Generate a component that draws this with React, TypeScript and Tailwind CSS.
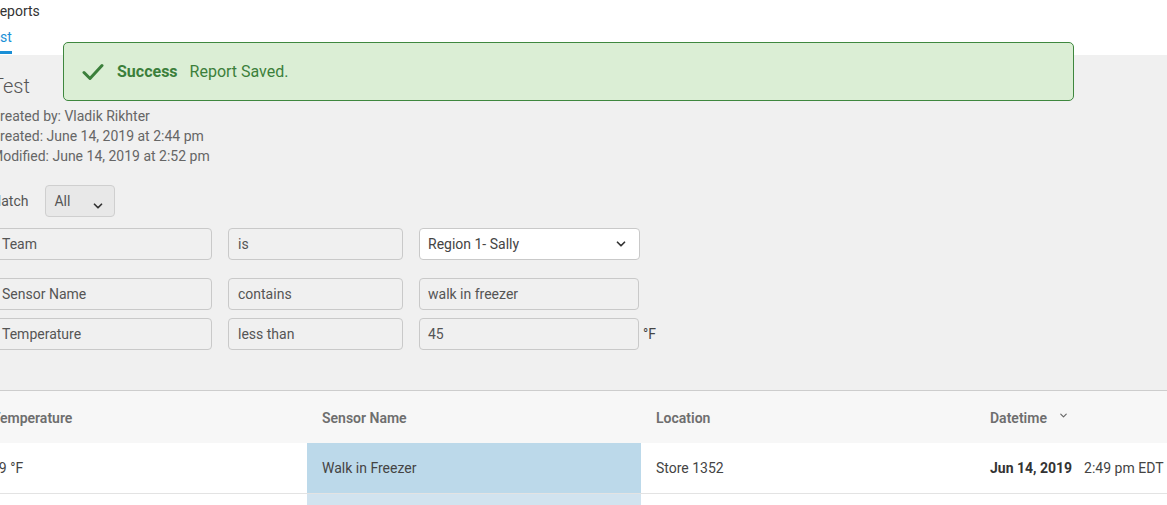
import React from "react"
import { ChevronDown } from "lucide-react"

const filters = [
  { field: "Team", op: "is", value: "Region 1- Sally", select: true },
  { field: "Sensor Name", op: "contains", value: "walk in freezer" },
  { field: "Temperature", op: "less than", value: "45", unit: "°F" },
]

function CheckIcon() {
  return (
    <svg width="22" height="20" viewBox="0 0 22 20" fill="none">
      <path d="M2 10.5 L8 16.5 L20 3.5" stroke="#3b7f3b" strokeWidth="3" strokeLinecap="round" strokeLinejoin="round" />
    </svg>
  )
}

export default function App() {
  return (
    <div className="relative w-[1167px] h-[505px] overflow-hidden bg-white text-[#555] font-['Roboto',sans-serif]">
      {/* top nav */}
      <div className="h-[55px] bg-white">
        <div className="-ml-[9px] pt-[2px] text-[14px] leading-[18px] text-[#333]">Reports</div>
        <div className="mt-[8px] -ml-[15px] inline-flex flex-col">
          <span className="text-[14px] leading-[18px] text-[#1a8fd6]">Test</span>
          <span className="mt-[5px] h-[3px] bg-[#1a8fd6]"></span>
        </div>
      </div>

      {/* body */}
      <div className="bg-[#f0f0f0] h-[335px] pt-[19px]">
        <div className="-ml-[8px]">
          <h1 className="text-[20px] leading-[24px] font-light text-[#555]">Test</h1>
          <div className="mt-[8px] text-[14px] leading-[20px] text-[#666]">
            <p className="-ml-[1px]">Created by: Vladik Rikhter</p>
            <p className="-ml-[1px]">Created: June 14, 2019 at 2:44 pm</p>
            <p className="-ml-[1px]">Modified: June 14, 2019 at 2:52 pm</p>
          </div>
        </div>

        <div className="-ml-[11px] mt-[19px] flex items-center gap-[17px]">
          <span className="text-[14px] text-[#555]">Match</span>
          <div className="relative w-[70px] h-[32px] rounded-[4px] border border-[#cfcfcf] bg-[#e8e8e8] pl-[8px] flex items-center text-[14px] text-[#555]">
            All
            <ChevronDown className="absolute right-[9px] top-[13px] w-[14px] h-[14px] text-[#333]" strokeWidth={3} />
          </div>
        </div>

        <div className="-ml-[10px] mt-[11px] flex flex-col">
          {filters.map((f, i) => (
            <div key={f.field} className={`flex items-center gap-[16px] ${i === 1 ? "mt-[18px]" : i === 2 ? "mt-[8px]" : ""}`}>
              <div className="w-[222px] h-[32px] rounded-[4px] border border-[#c9c9c9] px-[11px] flex items-center text-[14px] text-[#555]">{f.field}</div>
              <div className="w-[175px] h-[32px] rounded-[4px] border border-[#c9c9c9] px-[9px] flex items-center text-[14px] text-[#555]">{f.op}</div>
              {f.select ? (
                <div className="w-[221px] h-[32px] rounded-[4px] border border-[#c9c9c9] bg-white px-[8px] flex items-center justify-between text-[14px] text-[#444]">
                  {f.value}
                  <ChevronDown className="w-[14px] h-[14px] mr-[3px] text-[#333]" strokeWidth={3} />
                </div>
              ) : (
                <div className="w-[220px] h-[32px] rounded-[4px] border border-[#c9c9c9] px-[8px] flex items-center text-[14px] text-[#555]">{f.value}</div>
              )}
              {f.unit && <span className="-ml-[12px] text-[14px] text-[#444]">{f.unit}</span>}
            </div>
          ))}
        </div>
      </div>

      {/* table */}
      <div className="-ml-[23px] border-t border-[#cdcdcd]">
        <div className="grid grid-cols-[330px_334px_334px_1fr] h-[52px] bg-[#f7f7f7] items-center text-[14px] font-semibold text-[#6e6e6e]">
          <div className="pl-[15px] pt-[2px]">Temperature</div>
          <div className="pl-[15px] pt-[2px]">Sensor Name</div>
          <div className="pl-[15px] pt-[2px]">Location</div>
          <div className="pl-[15px] pt-[2px] flex items-center gap-[11px]">
            Datetime
            <ChevronDown className="w-[11px] h-[11px] -mt-[6px] text-[#666]" strokeWidth={2.5} />
          </div>
        </div>
        <div className="grid grid-cols-[330px_334px_334px_1fr] h-[51px] bg-white border-b border-[#e3e3e3] text-[14px] text-[#444]">
          <div className="pl-[14px] flex items-center">29 °F</div>
          <div className="pl-[15px] flex items-center bg-[#bcd9ea]">Walk in Freezer</div>
          <div className="pl-[15px] flex items-center">Store 1352</div>
          <div className="pl-[15px] flex items-center gap-[12px] whitespace-nowrap">
            <span className="font-bold text-[#333]">Jun 14, 2019</span>
            <span>2:49 pm EDT</span>
          </div>
        </div>
        <div className="grid grid-cols-[330px_334px_334px_1fr] h-[50px] bg-white">
          <div></div>
          <div className="bg-[#d1e3ef]"></div>
          <div></div>
          <div></div>
        </div>
      </div>

      {/* toast */}
      <div className="absolute left-[63px] top-[42px] w-[1011px] h-[59px] rounded-[5px] border border-[#3e873e] bg-[#dbeed5] flex items-center pl-[18px] text-[16px] text-[#3b7f3b]">
        <CheckIcon />
        <span className="ml-[13px] font-bold">Success</span>
        <span className="ml-[12px]">Report Saved.</span>
      </div>
    </div>
  )
}
